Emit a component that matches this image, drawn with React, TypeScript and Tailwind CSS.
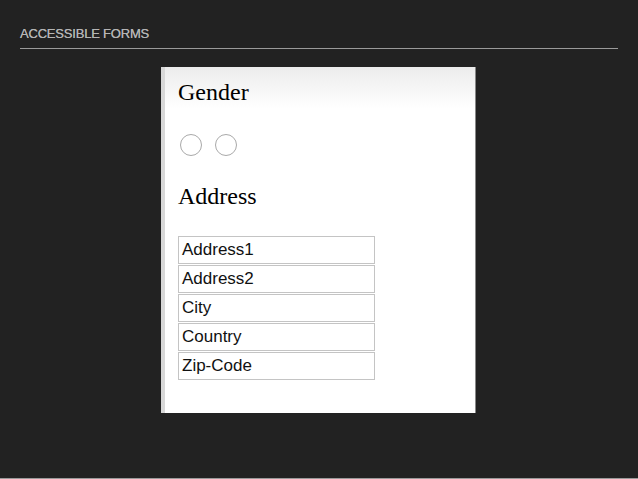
const fields = ["Address1", "Address2", "City", "Country", "Zip-Code"];

export default function App() {
  return (
    <div className="flex h-[479px] w-[638px] flex-col bg-[#222222] font-['Liberation_Sans',sans-serif]">
      <div className="mx-5 mt-[27px] border-b border-[#9a9a9a] pb-[7px]">
        <h1 className="text-[13px] leading-[14px] tracking-[-0.2px] text-[#b4b4b4] [text-shadow:0_0_0.4px_#b4b4b4]">
          ACCESSIBLE FORMS
        </h1>
      </div>

      <div className="ml-[161px] mt-[18px] flex h-[346px] w-[315px] border-r border-[#888]">
        <div className="w-[4px] bg-[#d8d8d8]" />
        <div className="flex flex-1 flex-col bg-gradient-to-b from-[#ececec] via-white via-[12%] to-white pl-[13px]">
          <h2 className="mt-[12px] font-['Liberation_Serif',serif] text-[24px] leading-[26px] text-black">
            Gender
          </h2>
          <div className="ml-[2px] mt-[29px] flex gap-[13px]">
            <span className="h-[22px] w-[22px] rounded-full border border-[#a9a9a9] bg-white" />
            <span className="h-[22px] w-[22px] rounded-full border border-[#a9a9a9] bg-white" />
          </div>
          <h2 className="mt-[27px] font-['Liberation_Serif',serif] text-[24px] leading-[26px] text-black">
            Address
          </h2>
          <div className="mt-[27px] flex flex-col gap-[1px]">
            {fields.map((f) => (
              <div
                key={f}
                className="flex h-[28px] w-[197px] items-center border border-[#c4c4c4] pl-[3px] text-[17px] text-[#111]"
              >
                {f}
              </div>
            ))}
          </div>
        </div>
      </div>
      <div className="mt-auto h-px bg-[#9a9a9a]" />
    </div>
  );
}
